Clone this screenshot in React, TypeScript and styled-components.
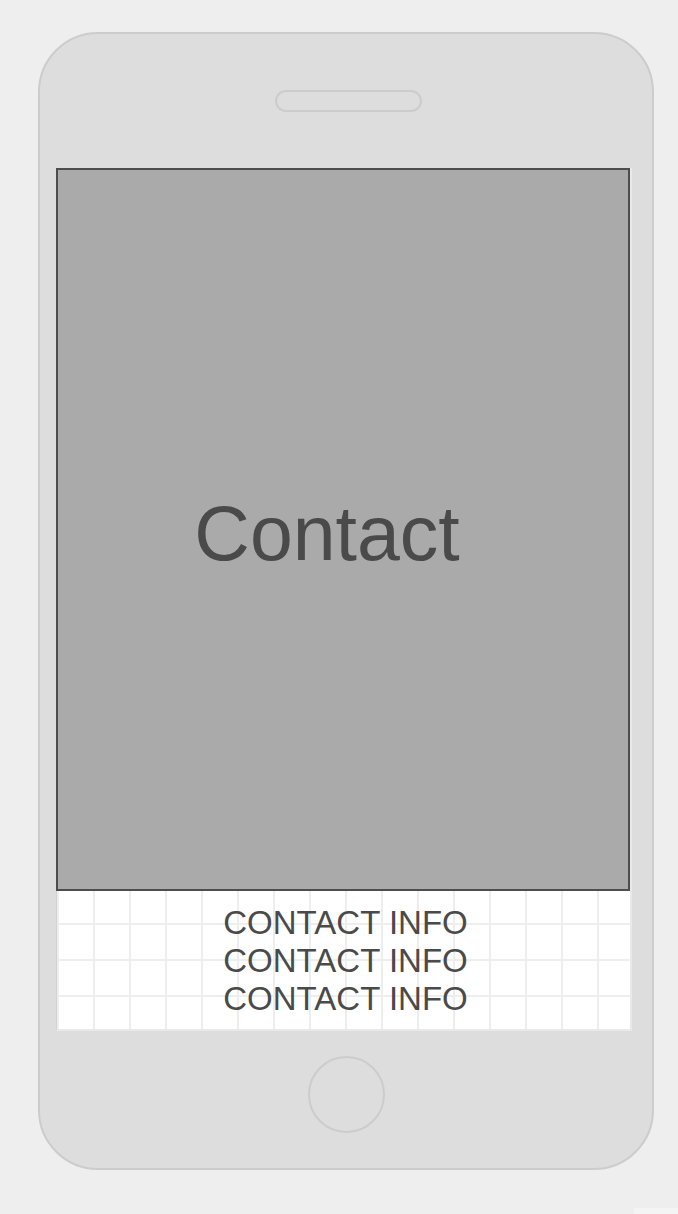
import React from "react";
import styled, { createGlobalStyle } from "styled-components";

const Global = createGlobalStyle`
  html, body {
    margin: 0;
    padding: 0;
    background: #eeeeee;
  }
  body {
    font-family: "Liberation Sans", Arial, sans-serif;
  }
`;

const Page = styled.div`
  display: flex;
  flex-direction: column;
  width: 678px;
  height: 1214px;
  padding-top: 32px;
  box-sizing: border-box;
`;

const Phone = styled.div`
  width: 616px;
  height: 1138px;
  margin-left: 38px;
  box-sizing: border-box;
  border: 2px solid #cccccc;
  border-radius: 60px;
  background: #dddddd;
  display: flex;
  flex-direction: column;
`;

const TopBezel = styled.div`
  height: 134px;
  display: flex;
  justify-content: center;
  padding-top: 56px;
  box-sizing: border-box;
`;

const Speaker = styled.div`
  width: 147px;
  height: 22px;
  margin-left: 4px;
  box-sizing: border-box;
  border: 2px solid #cccccc;
  border-radius: 12px;
`;

const Screen = styled.div`
  margin-left: 16px;
  width: 576px;
  height: 863px;
  box-sizing: border-box;
  background-color: #ffffff;
  background-image:
    linear-gradient(to right, #eeeeee 2px, transparent 2px),
    linear-gradient(to bottom, #eeeeee 2px, transparent 2px);
  background-size: 36px 36px;
  background-position: 0 -1px;
  border-right: 2px solid #e9e9e9;
  border-bottom: 2px solid #e9e9e9;
  border-left: 1px solid #d2d2d2;
  display: flex;
  flex-direction: column;
`;

const Hero = styled.div`
  width: 574px;
  margin-left: -1px;
  height: 723px;
  flex-shrink: 0;
  box-sizing: border-box;
  border: 2px solid #4d4d4d;
  background: #aaaaaa;
  display: flex;
  align-items: center;
  justify-content: center;
  padding: 7px 32px 0 0;
`;

const HeroTitle = styled.div`
  font-size: 77px;
  line-height: 77px;
  color: #4a4a4a;
`;

const InfoList = styled.div`
  display: flex;
  flex-direction: column;
  align-items: center;
  padding: 13px 0 0 4px;
`;

const InfoLine = styled.div`
  font-size: 33px;
  line-height: 38px;
  color: #4a4a4a;
`;

const BottomBezel = styled.div`
  flex: 1;
  display: flex;
  justify-content: center;
  padding-top: 25px;
  box-sizing: border-box;
`;

const HomeButton = styled.div`
  width: 77px;
  height: 77px;
  box-sizing: border-box;
  border: 2px solid #cccccc;
  border-radius: 50%;
`;

const CornerTab = styled.div`
  margin-top: 38px;
  margin-left: auto;
  width: 44px;
  height: 6px;
  background: #f4f4f4;
`;

export default function App() {
  return (
    <>
      <Global />
      <Page>
        <Phone>
          <TopBezel>
            <Speaker />
          </TopBezel>
          <Screen>
            <Hero>
              <HeroTitle>Contact</HeroTitle>
            </Hero>
            <InfoList>
              <InfoLine>CONTACT INFO</InfoLine>
              <InfoLine>CONTACT INFO</InfoLine>
              <InfoLine>CONTACT INFO</InfoLine>
            </InfoList>
          </Screen>
          <BottomBezel>
            <HomeButton />
          </BottomBezel>
        </Phone>
        <CornerTab />
      </Page>
    </>
  );
}
